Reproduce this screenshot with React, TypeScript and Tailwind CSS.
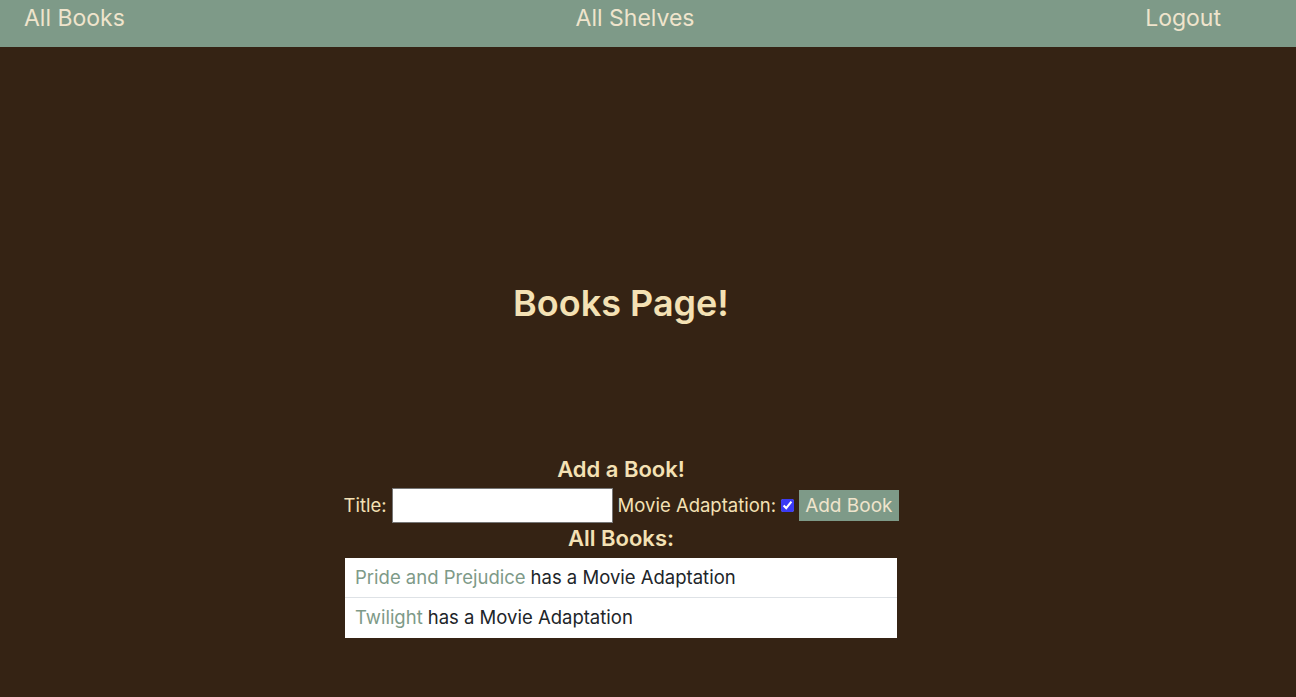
import React from "react";

export default function App() {
  return (
    <div className="min-h-[697px] bg-[#352314] font-['Inter',sans-serif]">
      <nav className="h-[47px] bg-[#7e9a88] flex items-start justify-between pt-[5px] pl-6 pr-[75px] text-[23px] leading-[26px] text-[#efe4cc]">
        <a>All Books</a>
        <a>All Shelves</a>
        <a>Logout</a>
      </nav>
      <div className="flex flex-col items-center pr-[54px]">
        <h1 className="mt-[234px] text-[36px] font-semibold text-[#f4e1b4] leading-[44px]">Books Page!</h1>
        <h2 className="mt-[131px] text-[22px] font-semibold text-[#f4e1b4] leading-[26px]">Add a Book!</h2>
        <form className="mt-[6px] flex items-center text-[18.5px] text-[#f4e1b4]" onSubmit={(e) => e.preventDefault()}>
          <label className="mr-[5px]">Title:</label>
          <input type="text" className="w-[221px] h-[35px] bg-white border border-[#767676] mr-[5px]" />
          <label className="mr-[5px]">Movie Adaptation:</label>
          <input type="checkbox" defaultChecked className="w-[13px] h-[13px] accent-[#3b3bf5] mr-[5px]" />
          <button className="h-[31px] px-[6px] bg-[#7e9a88] text-[#efe4cc] text-[19px] leading-none">Add Book</button>
        </form>
        <h2 className="mt-[2px] text-[22px] font-semibold text-[#f4e1b4] leading-[26px]">All Books:</h2>
        <ul className="mt-[7px] w-[552px] bg-white text-[18.5px] text-[#212529]">
          <li className="h-[40px] flex items-center px-[10px] border-b border-[#dee2e6]">
            <a className="text-[#7e9a88] mr-[5px]">Pride and Prejudice</a>has a Movie Adaptation
          </li>
          <li className="h-[40px] flex items-center px-[10px]">
            <a className="text-[#7e9a88] mr-[5px]">Twilight</a>has a Movie Adaptation
          </li>
        </ul>
      </div>
    </div>
  );
}
